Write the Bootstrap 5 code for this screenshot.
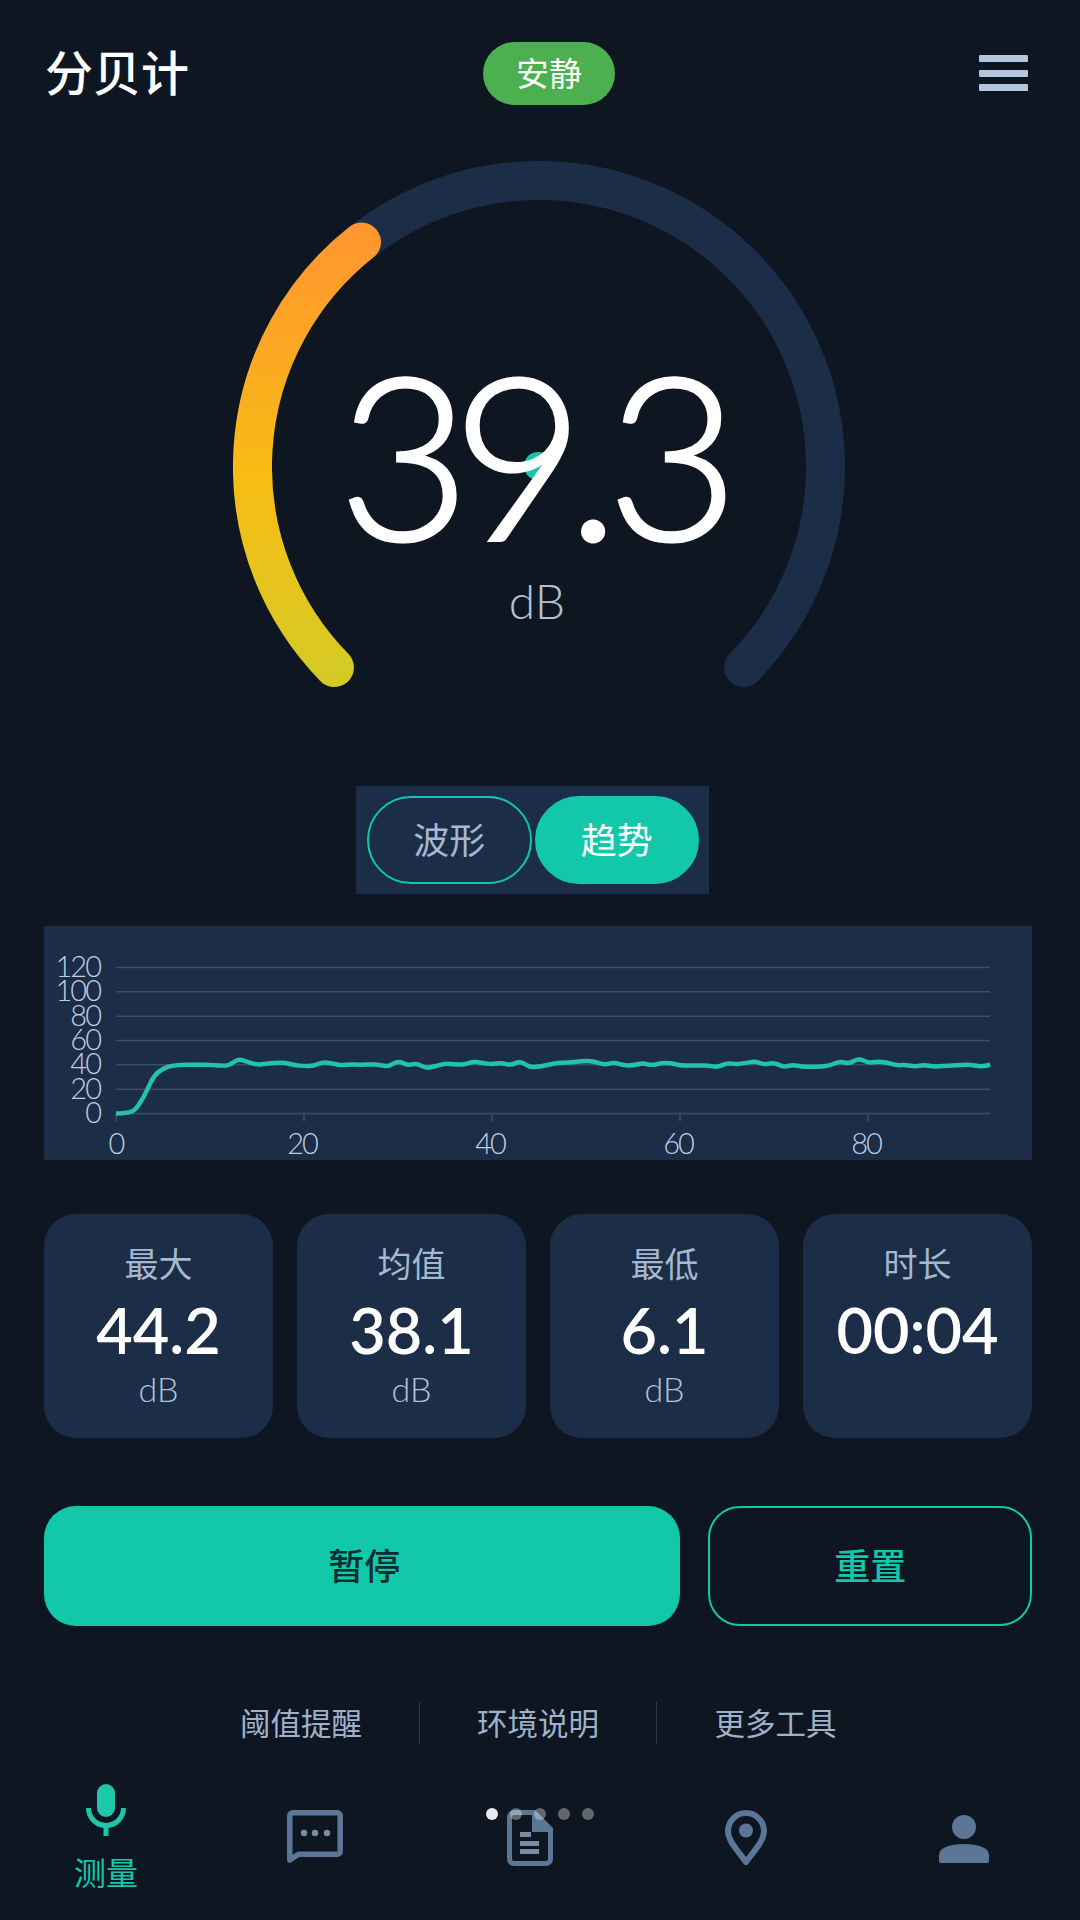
<!DOCTYPE html>
<html lang="zh">
<head>
  <meta charset="UTF-8">
  <title>分贝计</title>
  <link href="https://cdn.jsdelivr.net/npm/bootstrap@5.3.0/dist/css/bootstrap.min.css" rel="stylesheet">
  <style>
    body { background: #0e1622; font-family: "Lato", "Noto Sans CJK SC", sans-serif; color: #a5b8d0; }
    .app-shell { width: 1080px; height: 1920px; overflow: hidden; position: relative; }
    .top-bar { height: 150px; padding: 0 52px 0 45px; }
    .app-title { font-size: 48px; font-weight: 500; color: #fff; line-height: 1; margin: 0 0 4px; }
    .status-pill { width: 132px; height: 63px; border-radius: 32px; background: #4caf50; color: #fff; font-size: 33px; margin-left: -70px; margin-top: -3px; }
    .menu-lines { width: 49px; gap: 7.5px; margin-top: -4px; }
    .menu-lines span { display: block; height: 7px; background: #b4c6de; border-radius: 1px; }
    .gauge-box { height: 625px; margin-top: 11px; position: relative; }
    .gauge-svg { position: absolute; left: 233px; top: 0; }
    .gauge-num { position: absolute; left: 0; right: 0; top: 177px; text-align: center; font-size: 228px; font-weight: 300; color: #fff; line-height: 1; letter-spacing: -18px; padding-right: 21px; -webkit-text-stroke: 3px #fff; }
    .gauge-dot { letter-spacing: -13px; }
    .gauge-unit { position: absolute; left: 0; right: 0; top: 411px; text-align: center; font-size: 48px; font-weight: 300; line-height: 1.2; color: #b0c2d8; margin-left: -6px; }
    .mode-switch { width: 353px; height: 108px; padding: 10px 10px 10px 11px; background: #1b2d47; gap: 3px; margin: 0 auto 32px 356px; }
    .mode-btn { flex: 1; border-radius: 44px; font-size: 36px; background: transparent; border: 2px solid #12c8a9; color: #a5b8d0; padding: 0; }
    .mode-btn.is-on { background: #12c8a9; color: #fff; }
    .chart-panel { width: 988px; height: 234px; margin-left: 44px; background: #1b2d47; }
    .chart-panel text { font-family: "Lato", sans-serif; font-weight: 300; font-size: 29px; fill: #c0cee0; letter-spacing: -2px; }
    .stat-row { padding: 54px 48px 0 44px; gap: 24px; }
    .stat-box { width: 229px; height: 224px; border-radius: 32px; background: #1b2d47; padding-top: 29px; text-align: center; }
    .stat-label { font-size: 34px; line-height: 42px; }
    .stat-val { font-size: 63px; font-weight: 600; color: #fff; line-height: 72px; margin-top: 9px; }
    .stat-unit { font-size: 34px; font-weight: 300; line-height: 38px; color: #b0c2d8; margin-top: 4px; }
    .action-row { padding: 68px 48px 0 44px; gap: 28px; }
    .act-main, .act-alt { height: 120px; border-radius: 32px; font-size: 36px; font-weight: 500; }
    .act-main { width: 637px; background: #12c8a9; border: 0; color: #0d2c31; padding-left: 10px; }
    .act-alt { width: 324px; background: transparent; border: 2px solid #12c8a9; color: #12c8a9; }
    .tool-links { margin-top: 76px; height: 42px; padding-left: 183px; }
    .tool-links span { font-size: 30.5px; line-height: 42px; width: 237px; text-align: center; color: #9fb2ca; border-right: 1px solid #2a3a50; }
    .tool-links span:last-child { border-right: 0; }
    .bottom-nav { position: absolute; left: 0; right: 0; top: 1784px; padding-left: 46px; display: grid; grid-template-columns: 209px 215px 215.5px 218px 120px; }
    .nav-cell { width: 120px; }
    .nav-cell svg { display: block; margin: 0 auto; }
    .nav-cell span { display: block; font-size: 32px; line-height: 40px; color: #12c8a9; text-align: center; margin-top: 17px; }
    .nav-icon-low { padding-top: 26px; }
    .nav-icon-user { padding-top: 31px; }
    .pager { position: absolute; top: 1808px; left: 486px; gap: 12px; }
    .pager i { display: block; width: 12px; height: 12px; border-radius: 50%; background: rgba(255,255,255,.35); }
    .pager i:first-child { background: #e6e9ee; }
  </style>
</head>
<body>
<div class="app-shell">
  <div class="top-bar d-flex align-items-center justify-content-between">
    <h1 class="app-title">分贝计</h1>
    <div class="status-pill d-flex align-items-center justify-content-center">安静</div>
    <div class="menu-lines d-flex flex-column"><span></span><span></span><span></span></div>
  </div>

  <div class="gauge-box">
    <svg class="gauge-svg" width="612" height="612" viewBox="0 0 612 612">
      <defs>
        <linearGradient id="gaugeFill" gradientUnits="userSpaceOnUse" x1="0" y1="60" x2="0" y2="530">
          <stop offset="0" stop-color="#ff9430"/>
          <stop offset=".55" stop-color="#f8bc14"/>
          <stop offset="1" stop-color="#d2cb26"/>
        </linearGradient>
      </defs>
      <path d="M101.400 506.500A286.500 286.500 0 1 1 510.600 506.500" fill="none" stroke="#1b2d47" stroke-width="39" stroke-linecap="round"/>
      <path d="M101.400 506.500A286.500 286.500 0 0 1 128.500 81" fill="none" stroke="url(#gaugeFill)" stroke-width="39" stroke-linecap="round"/>
      <circle cx="305" cy="305" r="14" fill="#19c4a8"/>
    </svg>
    <div class="gauge-num">39<span class="gauge-dot">.</span>3</div>
    <div class="gauge-unit">dB</div>
  </div>

  <div class="mode-switch d-flex">
    <button class="mode-btn" type="button">波形</button>
    <button class="mode-btn is-on" type="button">趋势</button>
  </div>

  <div class="chart-panel">
    <svg id="trendChart" width="988" height="234" viewBox="0 0 988 234"></svg>
  </div>

  <div class="stat-row d-flex">
    <div class="stat-box"><div class="stat-label">最大</div><div class="stat-val">44.2</div><div class="stat-unit">dB</div></div>
    <div class="stat-box"><div class="stat-label">均值</div><div class="stat-val">38.1</div><div class="stat-unit">dB</div></div>
    <div class="stat-box"><div class="stat-label">最低</div><div class="stat-val">6.1</div><div class="stat-unit">dB</div></div>
    <div class="stat-box"><div class="stat-label">时长</div><div class="stat-val">00:04</div></div>
  </div>

  <div class="action-row d-flex">
    <button class="act-main" type="button">暂停</button>
    <button class="act-alt" type="button">重置</button>
  </div>

  <div class="tool-links d-flex">
    <span>阈值提醒</span><span>环境说明</span><span>更多工具</span>
  </div>

  <div class="bottom-nav">
    <div class="nav-cell">
      <svg width="40" height="52" viewBox="0 0 40 52">
        <rect x="11" y="0" width="18" height="33" rx="9" fill="#1fc7a9"/>
        <path d="M2.500 24a17.500 17.500 0 0 0 35 0" fill="none" stroke="#1fc7a9" stroke-width="5"/>
        <rect x="17.500" y="42" width="5" height="10" fill="#1fc7a9"/>
      </svg>
      <span>测量</span>
    </div>
    <div class="nav-cell nav-icon-low">
      <svg width="56" height="56" viewBox="0 0 56 56">
        <path d="M2.800 50V5.500A2.700 2.700 0 0 1 5.500 2.800h45a2.700 2.700 0 0 1 2.700 2.700v36a2.700 2.700 0 0 1-2.700 2.700H11.500z" fill="none" stroke="#5b7696" stroke-width="5.500" stroke-linejoin="round"/>
        <circle cx="17" cy="23" r="3.200" fill="#7b8da3"/><circle cx="28" cy="23" r="3.200" fill="#7b8da3"/><circle cx="40" cy="23" r="3.200" fill="#7b8da3"/>
      </svg>
    </div>
    <div class="nav-cell nav-icon-low">
      <svg width="46" height="56" viewBox="0 0 46 56">
        <path d="M27 2.500H7A4.500 4.500 0 0 0 2.500 7v42A4.500 4.500 0 0 0 7 53.500h32a4.500 4.500 0 0 0 4.500-4.500V19z" fill="none" stroke="#5b7696" stroke-width="5"/>
        <path d="M25 0l21 20v2H25z" fill="#5b7696"/>
        <rect x="13" y="22" width="11" height="5" fill="#7b8da3"/><rect x="13" y="31" width="19" height="5" fill="#7b8da3"/><rect x="13" y="39" width="19" height="5" fill="#7b8da3"/>
      </svg>
    </div>
    <div class="nav-cell nav-icon-low">
      <svg width="42" height="56" viewBox="0 0 42 56">
        <path d="M21 52C13 41 3 31 3 21a18 18 0 0 1 36 0C39 31 29 41 21 52z" fill="none" stroke="#5b7696" stroke-width="6" stroke-linejoin="round"/>
        <circle cx="21" cy="20.500" r="7" fill="#5b7696"/>
      </svg>
    </div>
    <div class="nav-cell nav-icon-user">
      <svg width="50" height="48" viewBox="0 0 50 48">
        <ellipse cx="25" cy="12" rx="12" ry="12" fill="#5b7696"/>
        <path d="M0 46V40C0 33 10 29 25 29s25 4 25 11v6a2 2 0 0 1-2 2H2a2 2 0 0 1-2-2z" fill="#5b7696"/>
      </svg>
    </div>
  </div>
  <div class="pager d-flex"><i></i><i></i><i></i><i></i><i></i></div>
</div>

<script src="https://cdn.jsdelivr.net/npm/bootstrap@5.3.0/dist/js/bootstrap.bundle.min.js"></script>
<script>
  // trend samples, one per second
  const samples = [0,0.3,2,14,31,37,39.5,40,40,40,40,39.5,39.2,45,42.5,40,41,41.7,41.7,39.7,39,39,42.3,41,39.5,40.5,40,40.5,40,38.5,43.5,39.5,41.3,37,39,41,40.5,40,42.7,41.5,40.5,41.7,39.5,43.3,38,38.5,40,41.7,41.7,42.5,43.5,42.5,40,42,39.5,39.5,41.5,39.5,41.5,41.5,39.5,39.5,39.5,39.5,38,41.5,40.5,41.5,43,40,42,38,40,38.5,38.5,38.5,39.5,43,40.8,45.5,41.5,42.8,42,39.5,40,38.5,40,38.5,39,39.5,40,40,38.5,40];
  const chart = document.getElementById("trendChart");
  const plotLeft = 72, plotRight = 946, plotTop = 41.5, plotBottom = 187.5;
  const xStep = 9.4;
  let html = "";

  for (let v = 0; v <= 120; v += 20) {
    const y = plotBottom - v / 120 * (plotBottom - plotTop);
    html += `<line x1="${plotLeft}" x2="${plotRight}" y1="${y}" y2="${y}" stroke="#3c4d66" stroke-width="1.5"/>`;
    html += `<text x="56" y="${y + 9.5}" text-anchor="end">${v}</text>`;
  }
  for (let v = 0; v <= 80; v += 20) {
    const x = plotLeft + v * xStep;
    html += `<line x1="${x}" x2="${x}" y1="${plotBottom}" y2="${plotBottom + 8}" stroke="#3c4d66" stroke-width="1.5"/>`;
    html += `<text x="${v ? x - 2 : x}" y="228" text-anchor="middle">${v}</text>`;
  }
  const pts = samples.map((v, i) => [plotLeft + i * xStep, plotBottom - v / 120 * (plotBottom - plotTop)]);
  // smooth through midpoints
  let d = `M${pts[0][0]} ${pts[0][1]}`;
  for (let i = 1; i < pts.length - 1; i++) {
    const mx = (pts[i][0] + pts[i + 1][0]) / 2, my = (pts[i][1] + pts[i + 1][1]) / 2;
    d += `Q${pts[i][0]} ${pts[i][1]} ${mx} ${my}`;
  }
  d += `L${pts[pts.length - 1][0]} ${pts[pts.length - 1][1]}`;
  html += `<path d="${d}" fill="none" stroke="#22c4a6" stroke-width="4.500" stroke-linejoin="round"/>`;
  chart.innerHTML = html;
</script>
</body>
</html>
